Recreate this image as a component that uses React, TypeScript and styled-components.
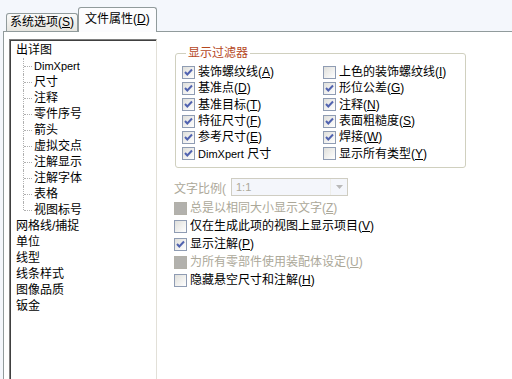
import type { ReactNode } from 'react';
import styled, { createGlobalStyle } from 'styled-components';

const GlobalStyle = createGlobalStyle`
  html, body { margin: 0; padding: 0; }
  body {
    font-family: "Liberation Sans", "Noto Sans CJK SC", sans-serif;
    font-size: 12px;
    color: #000;
    background: #fff;
  }
`;

const Latin = styled.span`
  font-family: "Liberation Sans", sans-serif;
  font-size: 11px;
`;

type Item = { label: ReactNode; checked?: boolean; disabled?: boolean };

const treeTop = ['出详图'];
const treeChildren: ReactNode[] = [
  <Latin key="d">DimXpert</Latin>, '尺寸', '注释', '零件序号', '箭头', '虚拟交点',
  '注解显示', '注解字体', '表格', '视图标号',
];
const treeRest = ['网格线/捕捉', '单位', '线型', '线条样式', '图像品质', '钣金'];

const filterLeft: Item[] = [
  { label: <>装饰螺纹线(<u>A</u>)</>, checked: true },
  { label: <>基准点(<u>D</u>)</>, checked: true },
  { label: <>基准目标(<u>T</u>)</>, checked: true },
  { label: <>特征尺寸(<u>F</u>)</>, checked: true },
  { label: <>参考尺寸(<u>E</u>)</>, checked: true },
  { label: <><Latin>DimXpert</Latin> 尺寸</>, checked: true },
];

const filterRight: Item[] = [
  { label: <>上色的装饰螺纹线(<u>I</u>)</>, checked: false },
  { label: <>形位公差(<u>G</u>)</>, checked: true },
  { label: <>注释(<u>N</u>)</>, checked: true },
  { label: <>表面粗糙度(<u>S</u>)</>, checked: true },
  { label: <>焊接(<u>W</u>)</>, checked: true },
  { label: <>显示所有类型(<u>Y</u>)</>, checked: false },
];

const options: Item[] = [
  { label: <>总是以相同大小显示文字(<u>Z</u>)</>, disabled: true },
  { label: <>仅在生成此项的视图上显示项目(<u>V</u>)</> },
  { label: <>显示注解(<u>P</u>)</>, checked: true },
  { label: <>为所有零部件使用装配体设定(<u>U</u>)</>, disabled: true },
  { label: <>隐藏悬空尺寸和注解(<u>H</u>)</> },
];

function Check({ item }: { item: Item }) {
  return (
    <CheckRow>
      <Box $disabled={item.disabled}>
        {item.checked && (
          <svg width="11" height="11" viewBox="0 0 11 11">
            <path d="M2 5 L4.3 7.5 L9 2.5" fill="none" stroke="#5163b0" strokeWidth="2" />
          </svg>
        )}
      </Box>
      <CheckText $disabled={item.disabled}>{item.label}</CheckText>
    </CheckRow>
  );
}

export default function App() {
  return (
    <Screen>
      <GlobalStyle />
      <TabBar>
        <Tab>系统选项(<u>S</u>)</Tab>
        <Tab $active>文件属性(<u>D</u>)</Tab>
      </TabBar>
      <Panel>
        <TreeBox>
          {treeTop.map((t) => <TreeRow key={t}>{t}</TreeRow>)}
          {treeChildren.map((t, i) => (
            <TreeChild key={i} $last={i === treeChildren.length - 1}>{t}</TreeChild>
          ))}
          {treeRest.map((t) => <TreeRow key={t}>{t}</TreeRow>)}
        </TreeBox>
        <RightPane>
          <GroupBox>
            <Legend>显示过滤器</Legend>
            <FilterGrid>
              <FilterCol>
                {filterLeft.map((f, i) => <Check key={i} item={f} />)}
              </FilterCol>
              <FilterCol>
                {filterRight.map((f, i) => <Check key={i} item={f} />)}
              </FilterCol>
            </FilterGrid>
          </GroupBox>
          <ScaleRow>
            <ScaleLabel>文字比例(</ScaleLabel>
            <Combo>
              <ComboText>1:1</ComboText>
              <ComboButton>
                <svg width="7" height="4" viewBox="0 0 7 4">
                  <path d="M0 0 L7 0 L3.5 4 Z" fill="#b9b9b9" />
                </svg>
              </ComboButton>
            </Combo>
          </ScaleRow>
          <OptionList>
            {options.map((o, i) => <Check key={i} item={o} />)}
          </OptionList>
        </RightPane>
      </Panel>
    </Screen>
  );
}

const Screen = styled.div`
  width: 512px;
  height: 379px;
  overflow: hidden;
  background: #f4f7fc;
  display: flex;
  flex-direction: column;
`;

const TabBar = styled.div`
  height: 31px;
  display: flex;
  align-items: flex-end;
  padding-left: 6px;
  flex-shrink: 0;
`;

const Tab = styled.div<{ $active?: boolean }>`
  box-sizing: border-box;
  height: ${(p) => (p.$active ? '25px' : '18px')};
  margin-bottom: ${(p) => (p.$active ? '-1px' : '0')};
  padding: ${(p) => (p.$active ? '3px 6px 0' : '0 3px')};
  line-height: 17px;
  border: 1px solid #919b9c;
  border-bottom: none;
  border-radius: 3px 3px 0 0;
  background: ${(p) => (p.$active ? '#fcfcfe' : 'linear-gradient(#fafaf9, #e6e5e0)')};
  position: relative;
  z-index: ${(p) => (p.$active ? 1 : 0)};
  white-space: nowrap;
  u { text-decoration-thickness: 1px; text-underline-offset: 1px; }
`;

const Panel = styled.div`
  flex: 1;
  margin-left: 3px;
  border-top: 1px solid #919b9c;
  border-left: 1px solid #919b9c;
  background: #fff;
  display: flex;
  padding: 7px 0 0 5px;
  gap: 17px;
`;

const TreeBox = styled.div`
  box-sizing: border-box;
  width: 148px;
  height: 360px;
  flex-shrink: 0;
  border: 1px solid;
  border-color: #808080 #e2e0d8 #e2e0d8 #808080;
  box-shadow: inset 1px 1px 0 #404040;
  background: #fff;
  padding: 2px 0 0 6px;
`;

const TreeRow = styled.div`
  height: 16px;
  line-height: 16px;
  white-space: nowrap;
`;

const TreeChild = styled(TreeRow)<{ $last?: boolean }>`
  position: relative;
  margin-left: 18px;
  &::before {
    content: '';
    position: absolute;
    left: -11px;
    top: 0;
    height: ${(p) => (p.$last ? '8px' : '16px')};
    border-left: 1px dotted #b0b0b0;
  }
  &::after {
    content: '';
    position: absolute;
    left: -10px;
    top: 8px;
    width: 8px;
    border-top: 1px dotted #b0b0b0;
  }
`;

const RightPane = styled.div`
  display: flex;
  flex-direction: column;
  padding-top: 7px;
`;

const GroupBox = styled.fieldset`
  box-sizing: border-box;
  width: 291px;
  height: 122px;
  margin: 0 0 0 1px;
  padding: 4px 0 0 6px;
  border: 1px solid #d0d0bf;
  border-radius: 3px;
`;

const Legend = styled.legend`
  margin-left: 4px;
  padding: 0 2px;
  line-height: 14px;
  color: #b5471e;
`;

const FilterGrid = styled.div`
  display: grid;
  grid-template-columns: 141px 1fr;
`;

const FilterCol = styled.div`
  display: flex;
  flex-direction: column;
  & > div { height: 16.3px; }
`;

const CheckRow = styled.div`
  display: flex;
  align-items: center;
  gap: 3px;
  white-space: nowrap;
  u { text-decoration-thickness: 1px; text-underline-offset: 1px; }
`;

const Box = styled.span<{ $disabled?: boolean }>`
  box-sizing: border-box;
  width: 13px;
  height: 13px;
  flex-shrink: 0;
  display: flex;
  align-items: center;
  justify-content: center;
  border: 1px solid ${(p) => (p.$disabled ? '#b2b0a8' : '#8f9cb3')};
  background: ${(p) => (p.$disabled ? '#b2b1ad' : 'linear-gradient(135deg, #dfdfdb, #ffffff)')};
`;

const CheckText = styled.span<{ $disabled?: boolean }>`
  color: ${(p) => (p.$disabled ? '#aca899' : '#000')};
  line-height: 14px;
`;

const ScaleRow = styled.div`
  display: flex;
  align-items: center;
  margin-top: 10px;
  height: 18px;
`;

const ScaleLabel = styled.span`
  width: 57px;
  white-space: nowrap;
  color: #aca899;
`;

const Combo = styled.div`
  box-sizing: border-box;
  width: 117px;
  height: 18px;
  border: 1px solid #cfcdc2;
  background: #f4f6fb;
  display: flex;
  align-items: center;
`;

const ComboText = styled.span`
  flex: 1;
  padding-left: 4px;
  color: #aca899;
  font-size: 11px;
`;

const ComboButton = styled.span`
  width: 16px;
  height: 16px;
  display: flex;
  align-items: center;
  justify-content: center;
  border-left: 1px solid #eeeeea;
`;

const OptionList = styled.div`
  display: flex;
  flex-direction: column;
  margin-top: 3px;
  & > div { height: 18px; }
`;
